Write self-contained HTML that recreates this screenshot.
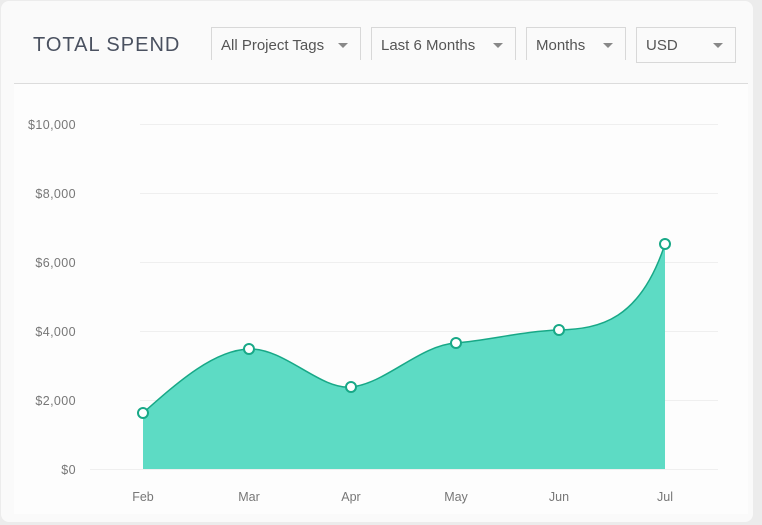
<!DOCTYPE html>
<html><head><style>
body{margin:0;background:#ececec;width:762px;height:525px;overflow:hidden;font-family:"Liberation Sans",sans-serif}
.card{position:absolute;left:1px;top:1px;width:752px;height:521px;background:#fafafa;border-radius:8px}
.inner{position:absolute;left:14px;top:84px;width:734px;height:430px;background:#fdfdfd}
.title{position:absolute;left:33px;top:34px;font-size:20px;letter-spacing:1px;color:#4a5160}
.dd{position:absolute;top:27px;height:33px;border:1px solid #d8d8d8;border-bottom:none;background:#fafafa;color:#555;font-size:15px;box-sizing:border-box;padding:9px 0 0 9px}
.dd:after{content:"";position:absolute;right:12px;top:15px;border-left:5px solid transparent;border-right:5px solid transparent;border-top:5px solid #888}
.hr{position:absolute;left:14px;top:83px;width:734px;height:1px;background:#dcdcdc}
</style></head><body>
<div class="card"></div>
<div class="inner"></div>
<div class="hr"></div>
<div class="title">TOTAL SPEND</div>
<div class="dd" style="left:211px;width:150px">All Project Tags</div>
<div class="dd" style="left:371px;width:145px">Last 6 Months</div>
<div class="dd" style="left:526px;width:100px">Months</div>
<div class="dd" style="left:636px;width:100px;height:36px;border-bottom:1px solid #d8d8d8">USD</div>
<svg style="position:absolute;left:0;top:0" width="762" height="525">
<g stroke="#efefef" stroke-width="1">
<line x1="140" y1="124.5" x2="718" y2="124.5"/><line x1="140" y1="193.5" x2="718" y2="193.5"/>
<line x1="140" y1="262.5" x2="718" y2="262.5"/><line x1="140" y1="331.5" x2="718" y2="331.5"/>
<line x1="140" y1="400.5" x2="718" y2="400.5"/><line x1="90" y1="469.5" x2="718" y2="469.5"/>
</g>
<g font-size="12.5" fill="#777" text-anchor="end" font-family="Liberation Sans,sans-serif" letter-spacing="0.4">
<text x="76" y="129">$10,000</text><text x="76" y="198">$8,000</text><text x="76" y="267">$6,000</text>
<text x="76" y="336">$4,000</text><text x="76" y="405">$2,000</text><text x="76" y="474">$0</text>
</g>
<g font-size="12.5" fill="#777" text-anchor="middle" font-family="Liberation Sans,sans-serif">
<text x="143" y="501">Feb</text><text x="249" y="501">Mar</text><text x="351" y="501">Apr</text>
<text x="456" y="501">May</text><text x="559" y="501">Jun</text><text x="665" y="501">Jul</text>
</g>
<path d="M143 413 C180 380,215 350,249 349 C285 348,320 390,351 387 C385 384,420 345,456 343 C490 340,525 331,559 330 C600 329,640 320,665 244 L665 469 L143 469 Z" fill="#5ddbc4"/>
<path d="M143 413 C180 380,215 350,249 349 C285 348,320 390,351 387 C385 384,420 345,456 343 C490 340,525 331,559 330 C600 329,640 320,665 244" fill="none" stroke="#18a887" stroke-width="1.5"/>
<g fill="#fff" stroke="#18a887" stroke-width="2">
<circle cx="143" cy="413" r="5"/><circle cx="249" cy="349" r="5"/><circle cx="351" cy="387" r="5"/>
<circle cx="456" cy="343" r="5"/><circle cx="559" cy="330" r="5"/><circle cx="665" cy="244" r="5"/>
</g>
</svg>
</body></html>
